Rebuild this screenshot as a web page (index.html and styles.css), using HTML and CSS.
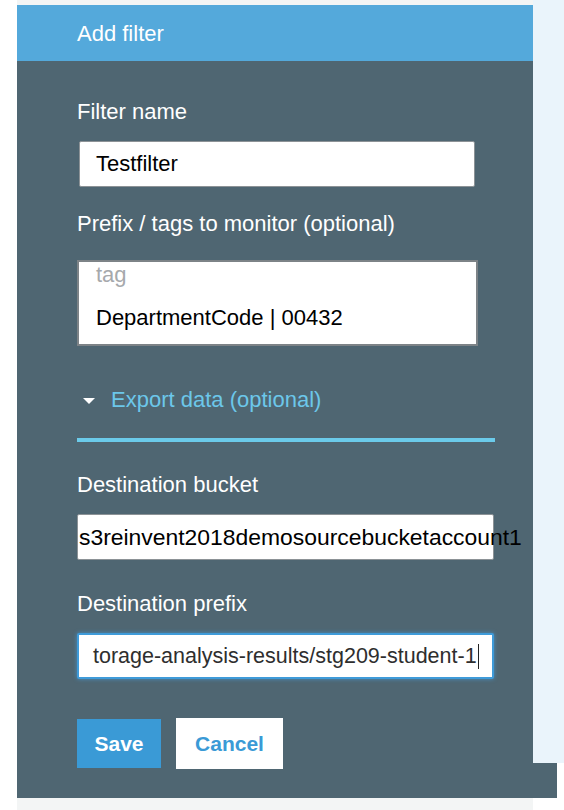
FILE: index.html
```html
<!DOCTYPE html>
<html lang="en">
<head>
<meta charset="utf-8">
<title>Add filter</title>
<link rel="stylesheet" href="styles.css">
</head>
<body>
<div class="page">
  <div class="strip"></div>
  <div class="header">Add filter</div>
  <div class="panel">
    <div class="label l-name">Filter name</div>
    <div class="field f-name">Testfilter</div>
    <div class="label l-prefix">Prefix / tags to monitor (optional)</div>
    <div class="tagbox">
      <div class="tag-ph">tag</div>
      <div class="tag-val">DepartmentCode | 00432</div>
    </div>
    <div class="toggle"><span class="caret"></span><span class="toggle-text">Export data (optional)</span></div>
    <div class="rule"></div>
    <div class="label l-bucket">Destination bucket</div>
    <div class="field f-bucket">s3reinvent2018demosourcebucketaccount1</div>
    <div class="label l-dprefix">Destination prefix</div>
    <div class="field f-prefix">torage-analysis-results/stg209-student-1<span class="cursor"></span></div>
    <div class="actions">
      <button class="btn save">Save</button>
      <button class="btn cancel">Cancel</button>
    </div>
  </div>
  <div class="strip"></div>
</div>
<div class="aside"></div>
</body>
</html>
```

FILE: styles.css
```css
html, body {
  margin: 0;
  padding: 0;
  background: #ffffff;
  font-family: "Liberation Sans", Arial, Helvetica, sans-serif;
  overflow: hidden;
}

.page {
  margin-left: 17px;
  width: 540px;
}

.strip {
  width: 516px;
  height: 5px;
  background: #f3f5f5;
}

.page > .strip:last-child {
  height: 12px;
}

.header {
  box-sizing: border-box;
  width: 516px;
  height: 56px;
  padding: 16px 0 0 60px;
  background: #54a9db;
  color: #ffffff;
  font-size: 22px;
  line-height: 26px;
}

.panel {
  background: #4f6672;
  padding: 38px 0 29px 60px;
  display: flex;
  flex-direction: column;
  align-items: flex-start;
}

.label {
  color: #ffffff;
  font-size: 22px;
  line-height: 26px;
  white-space: nowrap;
}

.field {
  box-sizing: border-box;
  height: 46px;
  background: #ffffff;
  border: 1px solid #8c9296;
  border-radius: 2px;
  font-size: 22px;
  line-height: 26px;
  padding: 9px 0 9px 16px;
  color: #000000;
  white-space: nowrap;
}

.f-name {
  margin-top: 16px;
  margin-left: 2px;
  width: 396px;
}

.l-prefix {
  margin-top: 24px;
}

.tagbox {
  box-sizing: border-box;
  margin-top: 23px;
  width: 401px;
  height: 86px;
  background: #ffffff;
  border: 2px solid #7d8387;
  padding: 0 0 0 17px;
  font-size: 22px;
  line-height: 26px;
}

.tag-ph {
  color: #a6a9ac;
}

.tag-val {
  margin-top: 17px;
  color: #000000;
}

.toggle {
  margin-top: 41px;
  display: flex;
  align-items: center;
  font-size: 22px;
  line-height: 26px;
  color: #6cc7ea;
}

.caret {
  width: 0;
  height: 0;
  margin-left: 6px;
  margin-right: 16px;
  margin-top: 1px;
  border-left: 6px solid transparent;
  border-right: 6px solid transparent;
  border-top: 6px solid #ffffff;
}

.rule {
  margin-top: 25px;
  width: 418px;
  height: 4px;
  background: #6bcbea;
}

.l-bucket {
  margin-top: 30px;
}

.f-bucket {
  margin-top: 16px;
  width: 417px;
  padding-left: 1px;
  font-size: 22.9px;
  overflow: visible;
}

.l-dprefix {
  margin-top: 31px;
}

.f-prefix {
  margin-top: 16px;
  width: 417px;
  padding-left: 14px;
  border: 2px solid #3f9bd9;
  box-shadow: 0 0 4px rgba(70, 160, 225, 0.75);
  color: #2e2e2e;
  font-size: 21.5px;
  padding-top: 8px;
  display: flex;
  align-items: flex-start;
}

.cursor {
  display: inline-block;
  width: 1px;
  height: 25px;
  margin-left: 1px;
  margin-top: 1px;
  background: #222222;
}

.actions {
  margin-top: 39px;
  display: flex;
  align-items: center;
  gap: 15px;
}

.btn {
  border: 0;
  margin: 0;
  padding: 0;
  font-family: "Liberation Sans", Arial, Helvetica, sans-serif;
  font-weight: bold;
  font-size: 21px;
  text-align: center;
  cursor: pointer;
}

.save {
  width: 84px;
  height: 49px;
  line-height: 49px;
  background: #3a9ad6;
  color: #ffffff;
}

.cancel {
  width: 107px;
  height: 51px;
  line-height: 51px;
  background: #ffffff;
  color: #3a9ad6;
}

.aside {
  position: absolute;
  left: 533px;
  top: 0;
  width: 31px;
  height: 763px;
  background: #eaf4fb;
}
```
